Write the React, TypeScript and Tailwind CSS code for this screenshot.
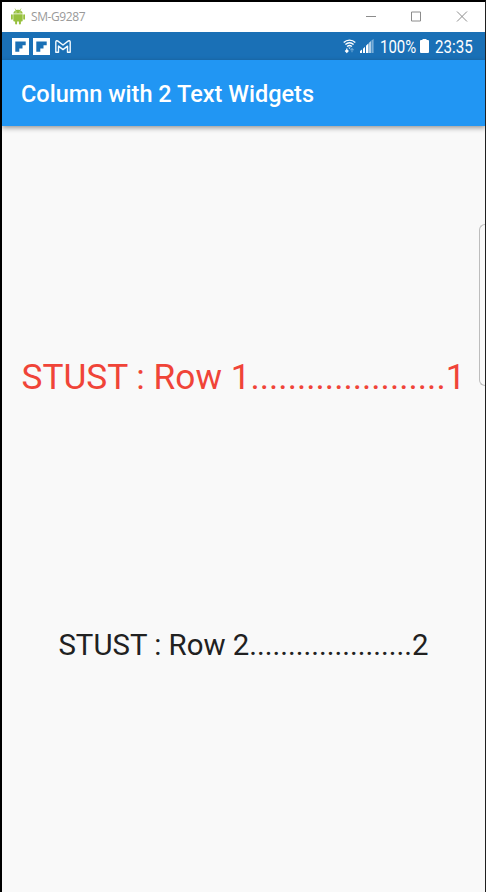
function AndroidIcon() {
  return (
    <svg width="14" height="17" viewBox="0 0 14 17" fill="#97c03d" className="shrink-0">
      <path d="M2.3 5.6C2.5 3.6 4.4 1.8 7 1.8s4.5 1.8 4.7 3.8z" />
      <path d="M4 .6l1.3 2M10 .6l-1.3 2" stroke="#97c03d" strokeWidth=".7" />
      <path d="M2.3 6.3h9.4v6.2a1 1 0 0 1-1 1H3.3a1 1 0 0 1-1-1z" />
      <rect x="0" y="6.2" width="1.8" height="5.5" rx=".9" />
      <rect x="12.2" y="6.2" width="1.8" height="5.5" rx=".9" />
      <rect x="4.1" y="12" width="2" height="4.5" rx="1" />
      <rect x="7.9" y="12" width="2" height="4.5" rx="1" />
      <circle cx="5" cy="4" r=".5" fill="#fff" />
      <circle cx="9" cy="4" r=".5" fill="#fff" />
    </svg>
  );
}

function FlipIcon() {
  return (
    <svg width="17" height="17" viewBox="0 0 17 17" className="shrink-0">
      <rect width="17" height="17" fill="#fff" />
      <path d="M3.3 3.5h10.4v3.7h-3.2v3.2H7.3v3.3h-4z" fill="#1a70b6" />
    </svg>
  );
}

function MailIcon() {
  return (
    <svg width="16" height="13" viewBox="0 0 16 13" fill="none" stroke="#f2faff" strokeWidth="1.4" strokeLinejoin="round" className="shrink-0">
      <path d="M.8 2C.8.6 2.1.4 3 1.1L8 5l5-3.9c.9-.7 2.2-.5 2.2.9v10.2h-2.7V6.1L8 9.6 3.5 6.1v6.1H.8z" />
    </svg>
  );
}

function WifiIcon() {
  return (
    <svg width="13" height="15" viewBox="0 0 13 15" fill="none" stroke="#fff" className="shrink-0">
      <path d="M.7 3.4C4 .3 9 .3 12.3 3.4M2.4 5.5c2.4-2.1 5.8-2.1 8.2 0M4.1 7.6c1.4-1.3 3.4-1.3 4.8 0" strokeWidth="1.4" />
      <path d="M5.3 8.6h2.4L6.5 10z" fill="#fff" stroke="none" />
      <path d="M3.8 9.5v4M2.2 11.5l1.6 1.8 1.6-1.8" strokeWidth="1.3" />
      <path d="M9 13.3V9.5M7.4 11.2L9 9.6l1.6 1.6" stroke="#69a5d4" strokeWidth="1.1" />
    </svg>
  );
}

function SignalIcon() {
  return (
    <svg width="14" height="14" viewBox="0 0 14 14" className="shrink-0">
      <path d="M0 14v-2l2-1.5V14zM3 14v-4.3l2-2V14zM6 14V6.8l2.5-2.5V14z" fill="#fff" />
      <path d="M9.2 14V3.7L10.8 2v12z" fill="#d5e8f6" />
      <path d="M11.4 14V1.6L13.6 0v14z" fill="#79aed8" />
    </svg>
  );
}

export default function App() {
  return (
    <div className="flex h-[892px] w-[486px] flex-col overflow-hidden border-l-2 border-r border-t-2 border-l-black border-r-[#202020] border-t-black bg-[#f9f9f9] font-['Roboto',sans-serif]">
      <div className="flex h-[30px] shrink-0 items-center bg-white pb-[2px] pl-[9px] pr-[17px]">
        <AndroidIcon />
        <span className="ml-[6px] pt-[2px] font-['Open_Sans',sans-serif] text-[12px] leading-4 tracking-[-0.4px] text-[#999]">SM-G9287</span>
        <svg width="102" height="11" viewBox="0 0 102 11" fill="none" stroke="#8c8c8c" className="ml-auto">
          <path d="M0 5.5h10M45.5 1h9v9h-9zM91 .5l10 10M101 .5l-10 10" />
        </svg>
      </div>
      <div className="flex h-7 shrink-0 items-center bg-[#1a70b6] pl-[10px] pr-[12px] text-white">
        <FlipIcon />
        <div className="ml-1 flex"><FlipIcon /></div>
        <div className="ml-[5px] flex"><MailIcon /></div>
        <div className="ml-auto flex items-center">
          <WifiIcon />
          <div className="ml-1 flex"><SignalIcon /></div>
          <span className="ml-[6px] w-[37px] whitespace-nowrap pt-[2px] text-[18px] leading-5">
            <span className="inline-block origin-left scale-x-[0.83]">100%</span>
          </span>
          <svg width="9" height="14" viewBox="0 0 9 14" fill="#fff" className="ml-[3px]">
            <path d="M2.5 0h4v1H8a1 1 0 0 1 1 1v11a1 1 0 0 1-1 1H1a1 1 0 0 1-1-1V2a1 1 0 0 1 1-1h1.5z" />
          </svg>
          <span className="ml-[6px] w-[38px] whitespace-nowrap pt-[2px] text-[18px] leading-5">
            <span className="inline-block origin-left scale-x-[0.84]">23:35</span>
          </span>
        </div>
      </div>
      <header className="z-10 flex h-[66px] shrink-0 items-center bg-[#2196f3] pl-[19px] pt-[2px] shadow-[0_2px_5px_rgba(0,0,0,0.4)]">
        <h1 className="whitespace-nowrap text-[23.5px] font-medium leading-7 text-white">Column with 2 Text Widgets</h1>
      </header>
      <main className="relative flex grow flex-col items-center pt-[230px]">
        <p className="whitespace-nowrap text-[35.25px] leading-[42px] text-[#f04438]">STUST : Row 1.....................1</p>
        <p className="mt-[229px] whitespace-nowrap text-[29.4px] leading-[36px] text-[#212121]">STUST : Row 2.....................2</p>
        <div className="absolute right-0 top-[98px] h-[162px] w-[6px] rounded-l-[6px] border border-r-0 border-[#bdbdbd] bg-[#f9f9f9]" />
      </main>
    </div>
  );
}
